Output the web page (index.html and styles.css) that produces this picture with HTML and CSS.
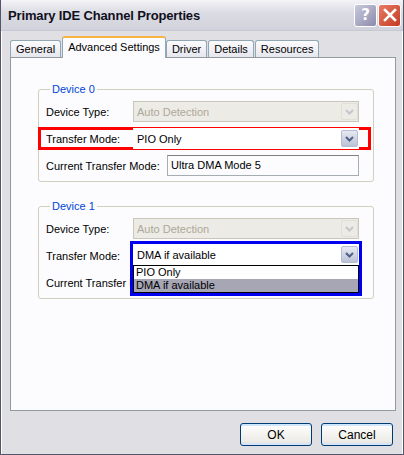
FILE: index.html
```html
<!DOCTYPE html>
<html lang="en">
<head>
  <meta charset="UTF-8" />
  <title>Primary IDE Channel Properties</title>
  <link rel="stylesheet" href="styles.css">
</head>
<body>
  <div class="window">
    <div class="titlebar">
      <span class="title">Primary IDE Channel Properties</span>
      <div class="title-buttons">
        <span class="tbtn help">?</span>
        <span class="tbtn close">
          <svg width="14" height="14" viewBox="0 0 14 14"><path d="M2 2 L12 12 M12 2 L2 12" stroke="#fff" stroke-width="2.6" stroke-linecap="square"/></svg>
        </span>
      </div>
    </div>

    <div class="client">
      <div class="tabs">
        <div class="tab">General</div>
        <div class="tab active">Advanced Settings</div>
        <div class="tab">Driver</div>
        <div class="tab">Details</div>
        <div class="tab">Resources</div>
      </div>

      <div class="panel">
        <fieldset class="group">
          <legend>Device 0</legend>
          <div class="row">
            <span class="label">Device Type:</span>
            <div class="combo disabled">
              <span class="value">Auto Detection</span>
              <span class="arrow"><svg width="9" height="6" viewBox="0 0 9 6"><path d="M1 1 L4.5 4.5 L8 1" fill="none" stroke="#c6c6cc" stroke-width="2"/></svg></span>
            </div>
          </div>
          <div class="row highlight">
            <span class="label">Transfer Mode:</span>
            <div class="combo plain">
              <span class="value">PIO Only</span>
              <span class="arrow"><svg width="9" height="6" viewBox="0 0 9 6"><path d="M1 1 L4.5 4.5 L8 1" fill="none" stroke="#4d6185" stroke-width="2"/></svg></span>
            </div>
          </div>
          <div class="row">
            <span class="label wide">Current Transfer Mode:</span>
            <div class="textbox">Ultra DMA Mode 5</div>
          </div>
        </fieldset>

        <fieldset class="group second">
          <legend>Device 1</legend>
          <div class="row">
            <span class="label">Device Type:</span>
            <div class="combo disabled">
              <span class="value">Auto Detection</span>
              <span class="arrow"><svg width="9" height="6" viewBox="0 0 9 6"><path d="M1 1 L4.5 4.5 L8 1" fill="none" stroke="#c6c6cc" stroke-width="2"/></svg></span>
            </div>
          </div>
          <div class="row">
            <span class="label">Transfer Mode:</span>
            <div class="open-combo">
              <div class="combo plain">
                <span class="value">DMA if available</span>
                <span class="arrow"><svg width="9" height="6" viewBox="0 0 9 6"><path d="M1 1 L4.5 4.5 L8 1" fill="none" stroke="#4d6185" stroke-width="2"/></svg></span>
              </div>
              <ul class="dropdown">
                <li>PIO Only</li>
                <li class="selected">DMA if available</li>
              </ul>
            </div>
          </div>
          <div class="row">
            <span class="label clipped">Current Transfer Mode:</span>
          </div>
        </fieldset>
      </div>

      <div class="buttons">
        <button class="btn">OK</button>
        <button class="btn">Cancel</button>
      </div>
    </div>
  </div>
</body>
</html>
```

FILE: styles.css
```css
body {
  margin: 0;
  font-family: 'Liberation Sans', Arial, sans-serif;
  font-size: 11px;
  color: #000;
  background: #fff;
}

.window {
  width: 404px;
  height: 455px;
  box-sizing: border-box;
  border: 1px solid #55556a;
  border-top: none;
  background: #e0dfe3;
  display: flex;
  flex-direction: column;
}

.titlebar {
  height: 30px;
  display: flex;
  align-items: center;
  justify-content: space-between;
  padding: 0 2px 0 7px;
  background: linear-gradient(to bottom, #f4f4f8 0%, #dcdce4 40%, #d2d2dc 100%);
  border-bottom: 1px solid #c8c8d2;
}

.title {
  font-weight: bold;
  font-size: 13px;
  color: #101020;
  letter-spacing: -0.15px;
}

.title-buttons {
  display: flex;
  gap: 1px;
}

.tbtn {
  width: 21px;
  height: 21px;
  border-radius: 3px;
  display: flex;
  align-items: center;
  justify-content: center;
  border: 1px solid #fff;
  box-sizing: content-box;
}

.help {
  background: linear-gradient(135deg, #c8c8dc, #8c8cac);
  color: #fff;
  font-weight: bold;
  font-size: 15px;
  font-family: 'DejaVu Sans', sans-serif;
}

.close {
  background: linear-gradient(135deg, #e87a64, #c63a22);
}

.client {
  flex: 1;
  display: flex;
  flex-direction: column;
  padding: 9px 6px 0 8px;
  border-left: 1px solid #fff;
  border-right: 1px solid #fff;
}

.tabs {
  display: flex;
  align-items: flex-end;
  height: 17px;
  position: relative;
  z-index: 1;
}

.tab {
  height: 16px;
  line-height: 16px;
  padding: 0 5px;
  margin-right: 1px;
  border: 1px solid #91a7b4;
  border-bottom: none;
  border-radius: 3px 3px 0 0;
  background: linear-gradient(to bottom, #fcfcfe, #e6e6ee);
}

.tab.active {
  height: 20px;
  line-height: 18px;
  margin: 0 0 -1px 0;
  border-top: 2px solid #f7b642;
  background: #fcfcfe;
}

.panel {
  height: 354px;
  box-sizing: border-box;
  border: 1px solid #919b9c;
  background: #fcfcfe;
  padding: 25px 21px 0 27px;
}

.group {
  margin: 0;
  padding: 5px 14px 10px 7px;
  border: 1px solid #d0d0bf;
  border-radius: 3px;
  height: 99px;
  box-sizing: border-box;
}

.group.second {
  margin-top: 18px;
}

.group legend {
  color: #0046d5;
  padding: 0 2px;
  margin-left: 4px;
}

.row {
  display: flex;
  align-items: center;
  height: 23px;
  margin-bottom: 4px;
  position: relative;
  white-space: nowrap;
}

.row .label {
  width: 87px;
  flex: none;
}

.row .label.wide {
  width: 121px;
}

.row .label.clipped {
  width: 84px;
  overflow: hidden;
}

.row.highlight {
  margin: 0 -12px 4px -8px;
  padding: 0 9px 0 5px;
  border: 3px solid #f00;
  height: 17px;
}

.combo {
  flex: 1;
  height: 21px;
  box-sizing: border-box;
  border: 1px solid #7f9db9;
  background: #fff;
  display: flex;
  align-items: center;
  padding-left: 3px;
}

.combo.plain {
  border-color: #fff;
}

.combo .value {
  flex: 1;
}

.combo .arrow {
  width: 17px;
  height: 17px;
  display: flex;
  align-items: center;
  justify-content: center;
  background: linear-gradient(to bottom, #e6e9f2, #bcc2d6);
  border: 1px solid #b3bcd2;
  box-sizing: border-box;
  border-radius: 2px;
}

.combo.disabled {
  background: #ecebe6;
  border-color: #c9c7ba;
  color: #aca899;
}

.combo.disabled .arrow {
  background: #ecebe6;
  border-color: #e0dfd8;
}

.textbox {
  flex: 1;
  height: 21px;
  box-sizing: border-box;
  border: 1px solid #a5acb2;
  border-top-color: #7f7f7f;
  background: #fcfcfe;
  padding-left: 3px;
  line-height: 19px;
}

.open-combo {
  flex: 1;
  align-self: flex-start;
  position: relative;
  margin: -3px -3px 0 -3px;
  border: 3px solid #0000f0;
  z-index: 2;
  background: #fff;
}

.dropdown {
  list-style: none;
  margin: 0;
  padding: 0;
  border: 1px solid #000;
  background: #fff;
}

.dropdown li {
  height: 13px;
  line-height: 13px;
  padding-left: 2px;
}

.dropdown li.selected {
  background: #a6a6b4;
}

.buttons {
  display: flex;
  justify-content: flex-end;
  gap: 9px;
  padding: 12px 3px 0 0;
}

.btn {
  width: 72px;
  height: 23px;
  font-family: 'Liberation Sans', Arial, sans-serif;
  font-size: 12px;
  border: 1px solid #003c74;
  border-radius: 3px;
  background: linear-gradient(to bottom, #ffffff, #ecebe6 85%, #d6d0c5);
  box-shadow: inset 0 -2px 0 #d8e4f8, inset 0 2px 0 #cee7ff;
}
```
